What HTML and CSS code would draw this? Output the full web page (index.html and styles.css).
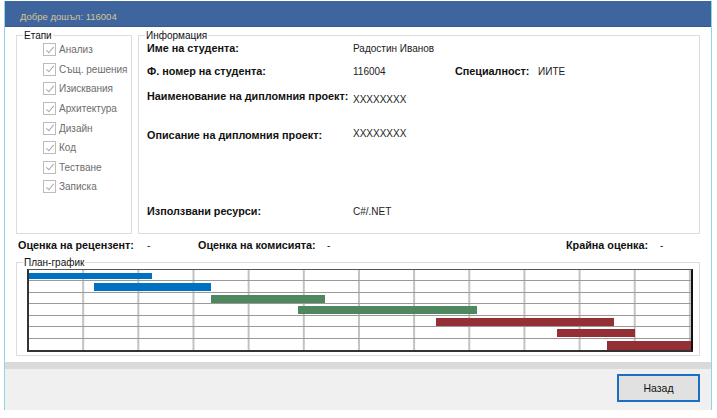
FILE: index.html
```html
<!DOCTYPE html>
<html lang="bg">
<head>
    <meta charset="UTF-8">
    <title>Дипломен проект</title>
    <link rel="stylesheet" href="styles.css">
</head>
<body>

<div class="window">

    <div class="titlebar">
        <span class="title">Добре дошъл: 116004</span>
    </div>

    <div class="client">

        <div class="top">

            <fieldset class="group stages">
                <legend>Етапи</legend>
                <ul class="checklist">
                    <li><span class="check"></span>Анализ</li>
                    <li><span class="check"></span>Същ. решения</li>
                    <li><span class="check"></span>Изисквания</li>
                    <li><span class="check"></span>Архитектура</li>
                    <li><span class="check"></span>Дизайн</li>
                    <li><span class="check"></span>Код</li>
                    <li><span class="check"></span>Тестване</li>
                    <li><span class="check"></span>Записка</li>
                </ul>
            </fieldset>

            <fieldset class="group info">
                <legend>Информация</legend>
                <div class="info-grid">
                    <div class="lbl">Име на студента:</div>
                    <div class="val">Радостин Иванов</div>

                    <div class="lbl">Ф. номер на студента:</div>
                    <div class="val spec">
                        <span class="num">116004</span>
                        <span class="lbl">Специалност:</span>
                        <span>ИИТЕ</span>
                    </div>

                    <div class="lbl">Наименование на дипломния проект:</div>
                    <div class="val low">XXXXXXXX</div>

                    <div class="lbl">Описание на дипломния проект:</div>
                    <div class="val high">XXXXXXXX</div>

                    <div class="lbl">Използвани ресурси:</div>
                    <div class="val">C#/.NET</div>
                </div>
            </fieldset>

        </div>

        <div class="grades">
            <span class="lbl">Оценка на рецензент:</span>
            <span>-</span>
            <span class="lbl">Оценка на комисията:</span>
            <span>-</span>
            <span class="lbl">Крайна оценка:</span>
            <span>-</span>
        </div>

        <fieldset class="group plan">
            <legend>План-график</legend>
            <div class="chart">
                <div class="row first"><div class="bar blue" style="margin-left:0%;width:18.58%"></div></div>
                <div class="row"><div class="bar blue" style="margin-left:9.82%;width:17.67%"></div></div>
                <div class="row"><div class="bar green" style="margin-left:27.49%;width:17.22%"></div></div>
                <div class="row"><div class="bar green" style="margin-left:40.63%;width:27.04%"></div></div>
                <div class="row"><div class="bar red" style="margin-left:61.48%;width:26.89%"></div></div>
                <div class="row"><div class="bar red" style="margin-left:79.76%;width:11.78%"></div></div>
                <div class="row last"><div class="bar red" style="margin-left:87.31%;width:12.69%"></div></div>
            </div>
        </fieldset>

    </div>

    <div class="strip"></div>

    <div class="footer">
        <button class="btn">Назад</button>
    </div>

</div>

</body>
</html>
```

FILE: styles.css
```css
* {
    box-sizing: border-box;
}

body {
    margin: 0;
    background: #ffffff;
    font-family: "Liberation Sans", Arial, sans-serif;
    font-size: 10px;
    line-height: 13px;
    color: #1a1a1a;
}

.window {
    width: 708px;
    margin-left: 4px;
    border-left: 1px solid #8fd6e8;
    border-right: 1px solid #8fd6e8;
}

/* title bar */

.titlebar {
    height: 26px;
    margin-top: 1px;
    padding: 9px 0 0 15px;
    background: #3f659f;
    border-bottom: 1px solid #36588c;
}

.title {
    color: #d8c590;
    font-size: 9.5px;
}

/* client area */

.client {
    padding: 2px 11px 6px 11px;
    background: #ffffff;
}

.top {
    display: flex;
    gap: 6px;
    height: 205px;
}

.group {
    margin: 0;
    border: 1px solid #dcdcdc;
    min-width: 0;
}

.group legend {
    padding: 0 1px;
    font-size: 10px;
    line-height: 13px;
    color: #111111;
}

.stages {
    width: 116px;
    padding: 0;
}

.stages legend {
    margin-left: 6px;
}

.info {
    flex: 1;
    padding: 0 8px;
}

.info legend {
    margin-left: -2px;
}

/* check list */

.checklist {
    list-style: none;
    margin: -2px 0 0 0;
    padding: 0 0 0 26px;
}

.checklist li {
    display: flex;
    align-items: center;
    gap: 3px;
    height: 19.6px;
    white-space: nowrap;
    color: #6d6d6d;
}

.check {
    position: relative;
    flex: none;
    width: 13px;
    height: 13px;
    border: 1px solid #bcbcbc;
    background: #ffffff;
}

.check::after {
    content: "";
    position: absolute;
    left: 3.5px;
    top: 0.5px;
    width: 3px;
    height: 7px;
    border-right: 1px solid #a8a8a8;
    border-bottom: 1px solid #a8a8a8;
    transform: rotate(40deg);
}

/* info */

.info-grid {
    display: grid;
    grid-template-columns: 206px 1fr;
    grid-template-rows: 23px 25px 39px 76px 13px;
}

.lbl {
    font-size: 10.8px;
    font-weight: bold;
    color: #111111;
    white-space: nowrap;
}

.val {
    color: #222222;
}

.val.low {
    padding-top: 3px;
}

.val.high {
    margin-top: -2px;
}

.spec {
    display: flex;
}

.spec .num {
    width: 102px;
}

.spec .lbl {
    width: 83px;
}

/* grades */

.grades {
    display: grid;
    grid-template-columns: 129px 51px 129px 239px 94px auto;
    margin: 5px 0 4px 2px;
}

/* plan chart */

.plan {
    padding: 0 6px 3px 10px;
}

.plan legend {
    margin-left: -4px;
}

.chart {
    border-left: 2px solid #333333;
    border-top: 1px solid #555555;
    border-right: 2px solid #111111;
    border-bottom: 2px solid #333333;
    background-image: linear-gradient(to right, transparent calc(100% - 2px), #c2c2c2 calc(100% - 2px));
    background-size: calc(100% / 12) 100%;
}

.row {
    height: 11.45px;
    padding-top: 2px;
    border-bottom: 1px solid #9a9a9a;
}

.row.first {
    padding-top: 3px;
}

.row.last {
    border-bottom: none;
}

.bar {
    height: 8px;
}

.row.first .bar {
    height: 6px;
}

.row.last .bar {
    height: 9px;
}

.blue {
    background: #0070c0;
}

.green {
    background: #4f875f;
}

.red {
    background: #943035;
}

/* bottom */

.strip {
    height: 7px;
    background: #dadada;
}

.footer {
    display: flex;
    justify-content: flex-end;
    height: 41px;
    padding: 5px 11px 0 0;
    background: #f0f0f0;
}

.btn {
    width: 83px;
    height: 28px;
    border: 2px solid #1a6fc4;
    background: #e1e1e1;
    font-family: "Liberation Sans", Arial, sans-serif;
    font-size: 10.5px;
    color: #111111;
}
```
